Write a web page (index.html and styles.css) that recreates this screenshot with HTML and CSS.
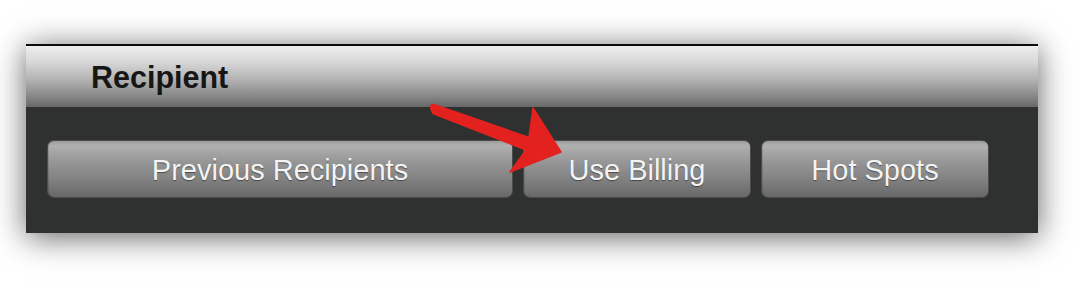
FILE: index.html
```html
<!DOCTYPE html>
<html lang="en">
<head>
<meta charset="utf-8">
<title>Recipient</title>
<link rel="stylesheet" href="styles.css">
</head>
<body>
<div class="page">
  <section class="panel">
    <header class="panel-header">
      <h2 class="panel-title">Recipient</h2>
    </header>
    <div class="panel-body">
      <button class="btn btn-wide" type="button">Previous Recipients</button>
      <button class="btn" type="button">Use Billing</button>
      <button class="btn" type="button">Hot Spots</button>
    </div>
    <svg class="arrow" viewBox="26 44 1012 189" aria-hidden="true">
      <path d="M431 106 Q430 109 433 113.5 L526 150 L510 172 L561 152 L533 108 L529 137.5 L434 104.5 Q431 104.5 431 106 Z" fill="#e3221f" stroke="#e3221f" stroke-width="1.5" stroke-linejoin="round"/>
    </svg>
  </section>
</div>
</body>
</html>
```

FILE: styles.css
```css
html, body {
  margin: 0;
  padding: 0;
  background: #ffffff;
}

.page {
  padding: 44px 0 61px 26px;
}

.panel {
  position: relative;
  width: 1012px;
  background: #2f3131;
  box-shadow: 0 4px 30px rgba(0, 0, 0, 0.62);
  font-family: "Liberation Sans", Arial, Helvetica, sans-serif;
}

.panel-header {
  height: 61px;
  border-top: 2px solid #0c0c0c;
  background: linear-gradient(to bottom, #ededed 0%, #dcdcdc 22%, #b3b3b3 55%, #888888 82%, #686868 100%);
  display: flex;
  align-items: center;
  padding-left: 65px;
}

.panel-title {
  margin: 0;
  font-size: 30.5px;
  font-weight: bold;
  color: #161616;
  line-height: 1;
  padding-top: 1px;
}

.panel-body {
  display: flex;
  gap: 10px;
  padding: 33px 0 35px 21px;
}

.btn {
  width: 228px;
  height: 58px;
  padding: 2px 0 0;
  border: 1px solid #4a4c4c;
  border-radius: 7px;
  background: linear-gradient(to bottom, #9b9b9b 0%, #b0b0b0 8%, #989898 35%, #808080 70%, #686868 100%);
  box-shadow: inset 1px 0 0 rgba(0, 0, 0, 0.12);
  color: #f4f4f4;
  font-family: "Liberation Sans", Arial, Helvetica, sans-serif;
  font-size: 29px;
  text-shadow: 0 1px 1px rgba(0, 0, 0, 0.45);
  line-height: 1;
  cursor: pointer;
}

.btn-wide {
  width: 466px;
}

.arrow {
  position: absolute;
  left: 0;
  top: 0;
  width: 1012px;
  height: 189px;
  overflow: visible;
  pointer-events: none;
}
```
